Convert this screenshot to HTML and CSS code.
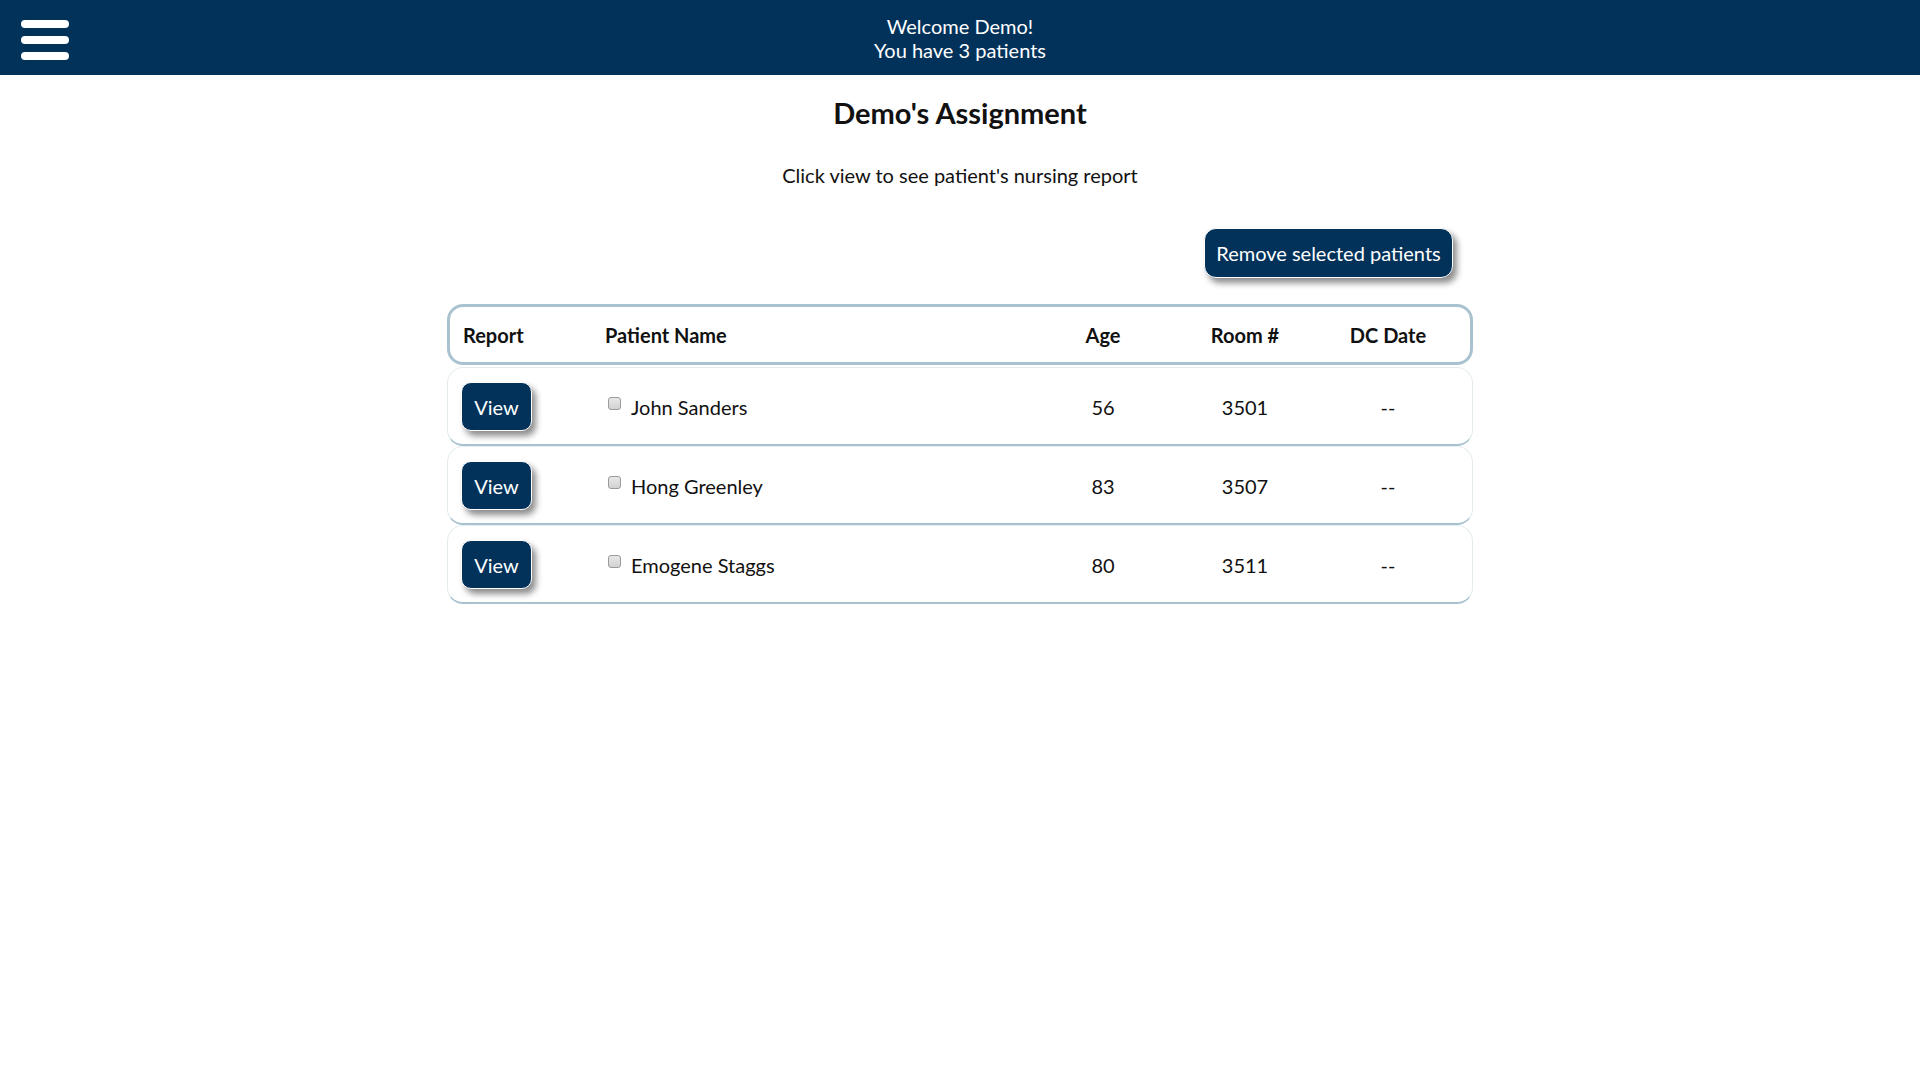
FILE: index.html
```html
<!DOCTYPE html>
<html>
<head>
<meta charset="utf-8">
<link rel="stylesheet" href="styles.css">
</head>
<body>
<header class="topbar">
  <div class="menu">
    <span class="bar"></span><span class="bar"></span><span class="bar"></span>
  </div>
  <div class="welcome">Welcome Demo!<br>You have 3 patients</div>
  <div></div>
</header>
<main class="main">
  <h1 class="title">Demo's Assignment</h1>
  <p class="subtitle">Click view to see patient's nursing report</p>
  <div class="actions"><button class="btn btn-remove">Remove selected patients</button></div>
  <div class="table">
    <div class="row head">
      <div class="c c-report">Report</div>
      <div class="c c-name">Patient Name</div>
      <div class="c c-center">Age</div>
      <div class="c c-center">Room #</div>
      <div class="c c-center">DC Date</div>
    </div>
    <div class="rows">
      <div class="row body">
        <div class="c c-report"><button class="btn btn-view">View</button></div>
        <div class="c c-name"><span class="check"></span>John Sanders</div>
        <div class="c c-center">56</div>
        <div class="c c-center">3501</div>
        <div class="c c-center">--</div>
      </div>
      <div class="row body">
        <div class="c c-report"><button class="btn btn-view">View</button></div>
        <div class="c c-name"><span class="check"></span>Hong Greenley</div>
        <div class="c c-center">83</div>
        <div class="c c-center">3507</div>
        <div class="c c-center">--</div>
      </div>
      <div class="row body">
        <div class="c c-report"><button class="btn btn-view">View</button></div>
        <div class="c c-name"><span class="check"></span>Emogene Staggs</div>
        <div class="c c-center">80</div>
        <div class="c c-center">3511</div>
        <div class="c c-center">--</div>
      </div>
    </div>
  </div>
</main>
</body>
</html>
```

FILE: styles.css
```css
* { box-sizing: border-box; }
body {
  margin: 0;
  font-family: Lato, "Open Sans", sans-serif;
  color: #111;
  background: #fff;
}
.topbar {
  height: 75px;
  background: #02325a;
  display: grid;
  grid-template-columns: 1fr auto 1fr;
  color: #fff;
}
.menu {
  padding: 20px 0 0 21px;
  display: flex;
  flex-direction: column;
  gap: 8px;
}
.bar {
  display: block;
  width: 48px;
  height: 8px;
  border-radius: 4px;
  background: #fff;
}
.welcome {
  padding-top: 14px;
  font-size: 20px;
  line-height: 24px;
  text-align: center;
}
.main {
  width: 1026px;
  margin: 0 auto;
}
.title {
  margin: 20px 0 0;
  font-size: 29px;
  line-height: 36px;
  font-weight: 700;
  text-align: center;
}
.subtitle {
  margin: 32px 0 0;
  font-size: 20px;
  line-height: 24px;
  text-align: center;
}
.actions {
  margin-top: 41px;
  display: flex;
  justify-content: flex-end;
  padding-right: 20px;
}
.btn {
  font-family: Lato, "Open Sans", sans-serif;
  font-size: 20px;
  color: #fff;
  background: #02325a;
  border: 1px solid #fff;
  cursor: pointer;
  box-shadow: 4px 5px 6px rgba(0,0,0,0.45);
}
.btn-remove {
  width: 249px;
  height: 50px;
  border-radius: 12px;
  padding: 0;
}
.table {
  margin-top: 26px;
}
.rows {
  padding-top: 2px;
}
.row {
  display: grid;
  grid-template-columns: 145px 1fr 140px 144px 142px;
  padding-right: 11px;
  align-items: center;
}
.head {
  height: 61px;
  border: 3px solid #a8c3cf;
  border-radius: 16px;
  font-size: 20px;
  font-weight: 700;
}
.head .c-report { padding-left: 13px; }
.head .c-name { padding-left: 10px; }
.body {
  height: 79px;
  padding-top: 1px;
  padding-right: 13px;
  border: 1px solid #e4ecef;
  border-bottom: 2px solid #a8c3cf;
  border-radius: 16px;
  font-size: 20px;
}
.body .c-report { padding-left: 13px; }
.c-name {
  padding-left: 15px;
  display: flex;
  align-items: center;
}
.c-center { text-align: center; }
.btn-view {
  width: 71px;
  height: 49px;
  border-radius: 10px;
  padding: 0;
}
.check {
  display: inline-block;
  width: 13px;
  height: 13px;
  border: 1px solid #9a9a9a;
  border-radius: 3px;
  background: linear-gradient(#e8e8e8, #d2d2d2);
  margin-right: 10px;
  position: relative;
  top: -3px;
}
```
